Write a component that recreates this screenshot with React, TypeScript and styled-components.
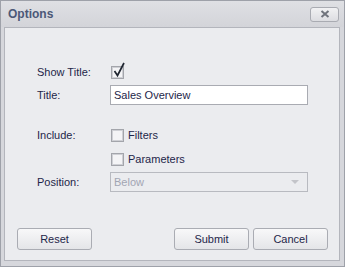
import React, { useState } from 'react';
import styled, { createGlobalStyle } from 'styled-components';

const GlobalStyle = createGlobalStyle`
  html, body {
    margin: 0;
    padding: 0;
    background: #ffffff;
  }
  body {
    font-family: 'Liberation Sans', Arial, sans-serif;
    font-size: 11px;
    color: #1e2649;
  }
`;

const Window = styled.div`
  width: 345px;
  height: 267px;
  box-sizing: border-box;
  border: 1px solid #9ea1a9;
  background: #d6d7dc;
  display: flex;
  flex-direction: column;
  padding: 0 4px 5px 3px;
`;

const TitleBar = styled.div`
  height: 25px;
  display: flex;
  align-items: center;
  justify-content: space-between;
  background: linear-gradient(#dfe0e4, #d3d4d9);
  margin: 0 -4px 0 -3px;
  padding: 0 5px 1px 7px;
`;

const Caption = styled.span`
  font-weight: bold;
  font-size: 12px;
  color: #4c5877;
  margin-top: 1px;
`;

const CloseButton = styled.button`
  width: 29px;
  height: 15px;
  padding: 0;
  border: 1px solid #a9abb2;
  border-radius: 3px;
  background: linear-gradient(#f1f1f3, #dcdde1);
  display: flex;
  align-items: center;
  justify-content: center;
  margin-top: 1px;
`;

const Body = styled.div`
  flex: 1;
  border: 1px solid #b3b5bc;
  background: #ebecef;
  display: flex;
  flex-direction: column;
  padding: 34px 11px 10px 12px;
`;

const Form = styled.div`
  display: flex;
  flex-direction: column;
  padding-left: 20px;
  flex: 1;
`;

const Row = styled.div<{ $top: number }>`
  display: flex;
  align-items: center;
  height: 20px;
  margin-top: ${(p) => p.$top}px;
`;

const Label = styled.span`
  width: 73px;
  flex: none;
`;

const CheckWrap = styled.label`
  display: flex;
  align-items: center;
  gap: 4px;
  margin-left: 1px;
`;

const Box = styled.span`
  position: relative;
  width: 11px;
  height: 11px;
  border: 1px solid #a3a5ab;
  background: #f4f4f6;
  box-shadow: inset 0 0 0 1px #cfd0d5;
  display: inline-block;
`;

const Tick = styled.svg`
  position: absolute;
  left: 1px;
  top: -5px;
`;

const TextInput = styled.input`
  width: 198px;
  height: 20px;
  box-sizing: border-box;
  border: 1px solid #a9abb2;
  background: #ffffff;
  font-family: inherit;
  font-size: 11px;
  color: #1e2649;
  padding: 0 3px;
  outline: none;
`;

const Combo = styled.div`
  width: 198px;
  height: 20px;
  box-sizing: border-box;
  border: 1px solid #b8bac0;
  display: flex;
  align-items: center;
  justify-content: space-between;
  padding: 0 8px 0 3px;
  color: #a2a5b3;
`;

const Arrow = styled.span`
  width: 0;
  height: 0;
  border-left: 4px solid transparent;
  border-right: 4px solid transparent;
  border-top: 4px solid #c3c4c9;
`;

const Footer = styled.div`
  display: flex;
  gap: 4px;
`;

const Button = styled.button<{ $push?: boolean }>`
  width: 75px;
  height: 22px;
  box-sizing: border-box;
  border: 1px solid #aaacb3;
  border-radius: 3px;
  background: linear-gradient(#f8f8f9, #e4e5e8);
  font-family: inherit;
  font-size: 11px;
  color: #1e2649;
  padding: 0;
  margin-left: ${(p) => (p.$push ? 'auto' : '0')};
`;

function CheckBox({ checked, label }: { checked: boolean; label?: string }) {
  return (
    <CheckWrap>
      <Box>
        {checked && (
          <Tick width="13" height="16" viewBox="0 0 13 16">
            <path d="M1.5 9 L4.5 13.5 L11 1" stroke="#1f2530" strokeWidth="1.7" fill="none" />
          </Tick>
        )}
      </Box>
      {label && <span>{label}</span>}
    </CheckWrap>
  );
}

export default function App() {
  const [title, setTitle] = useState('Sales Overview');

  return (
    <>
      <GlobalStyle />
      <Window>
        <TitleBar>
          <Caption>Options</Caption>
          <CloseButton aria-label="Close">
            <svg width="10" height="8" viewBox="0 0 10 8">
              <path d="M1.5 1 L8.5 7 M8.5 1 L1.5 7" stroke="#6f737c" strokeWidth="2" />
            </svg>
          </CloseButton>
        </TitleBar>
        <Body>
          <Form>
            <Row $top={0}>
              <Label>Show Title:</Label>
              <CheckBox checked />
            </Row>
            <Row $top={3}>
              <Label>Title:</Label>
              <TextInput value={title} onChange={(e) => setTitle(e.target.value)} />
            </Row>
            <Row $top={20}>
              <Label>Include:</Label>
              <CheckBox checked={false} label="Filters" />
            </Row>
            <Row $top={4}>
              <Label />
              <CheckBox checked={false} label="Parameters" />
            </Row>
            <Row $top={3}>
              <Label>Position:</Label>
              <Combo>
                <span>Below</span>
                <Arrow />
              </Combo>
            </Row>
          </Form>
          <Footer>
            <Button>Reset</Button>
            <Button $push>Submit</Button>
            <Button>Cancel</Button>
          </Footer>
        </Body>
      </Window>
    </>
  );
}
